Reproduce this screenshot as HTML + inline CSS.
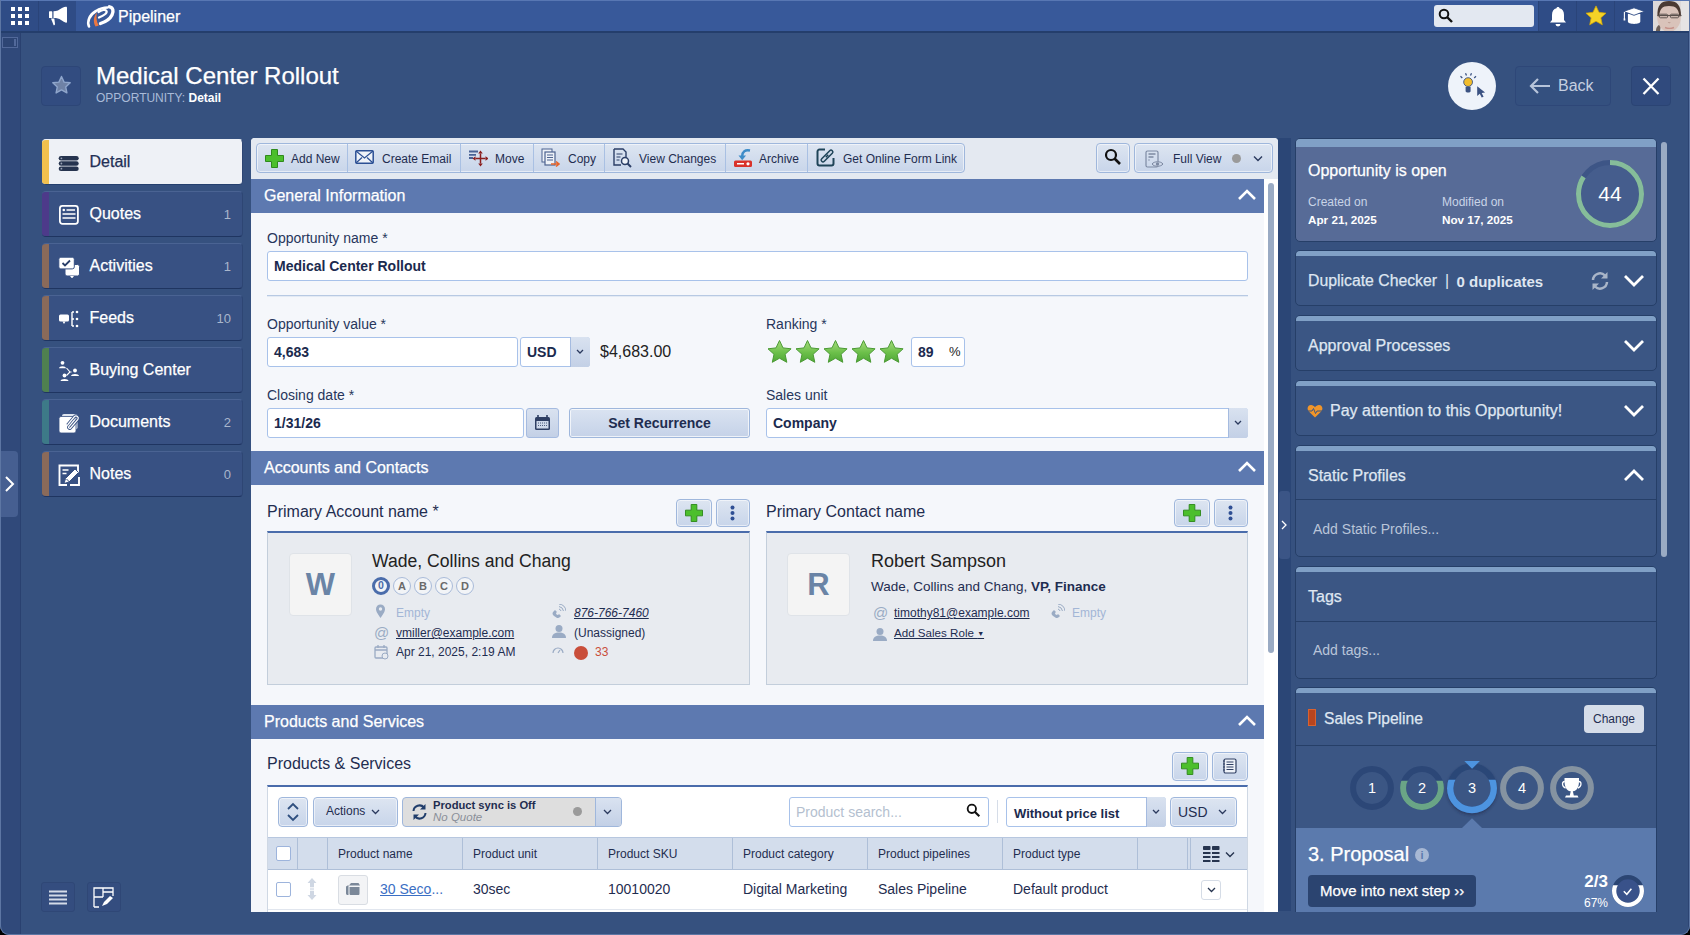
<!DOCTYPE html>
<html><head><meta charset="utf-8">
<style>
*{box-sizing:border-box;margin:0;padding:0}
html,body{width:1690px;height:935px;overflow:hidden}
body{position:relative;background:#36517f;font-family:"Liberation Sans",sans-serif;color:#1f2d50}
.a{position:absolute}
.w{color:#fff}
.st{-webkit-text-stroke:.25px currentColor}
.nw{white-space:nowrap}
/* top bar */
#top{left:0;top:0;width:1690px;height:33px;background:#38599a;border-top:1px solid #5877b3;border-bottom:2px solid #243e6c}
.tico{top:0;height:30px;background:#2f4c86}
/* left nav */
.nav{left:42px;width:201px;height:46px;border-radius:4px;background:#385183;border-top:1px solid #4a6393;border-bottom:1px solid #1f3561;border-right:1px solid #2e4674;overflow:hidden}
.nav .bar{left:0;top:-1px;bottom:-1px;width:7px}
.nav .lbl{left:47.5px;top:13px;font-size:16px;color:#fff;white-space:nowrap;-webkit-text-stroke:.25px currentColor}
.nav .cnt{right:11px;top:15px;font-size:13px;color:#a9b6cc}
.nav svg{position:absolute;left:16px;top:12px}

.tb{top:143px;height:30px;border:1px solid #9fb7dc;border-radius:4px;background:linear-gradient(#dde5f1,#c8d5ea);box-shadow:inset 0 0 0 1px rgba(255,255,255,.55)}
.tb.sm{border-color:#9fb7dc}
.sep{top:144px;width:1px;height:28px;background:#a9c0e3}
.tbt{top:152px;font-size:12px;color:#1f2d50;white-space:nowrap}
.sh{left:251px;width:1013px;height:34px;background:#5d79b0}
.sh span{position:absolute;left:13px;top:8px;font-size:16px;color:#fff;white-space:nowrap;-webkit-text-stroke:.25px currentColor}
.chev{left:1237px}
.lab{font-size:14px;color:#27365c;white-space:nowrap}
.inp{background:#fff;border:1px solid #a8c2ea;border-radius:3px}
.inp span{position:absolute;left:6px;top:6px;font-size:14px;font-weight:700;color:#1b2a4e;white-space:nowrap}
.dd{background:linear-gradient(#d9e2f0,#c3d0e6);border-left:1px solid #a5bbe0;border-radius:0 3px 3px 0}
.btn{background:linear-gradient(#dae3f1,#c5d2e8);border:1px solid #9fb7dc;box-shadow:inset 0 0 0 1px rgba(255,255,255,.7);border-radius:3px;font-size:14px;font-weight:700;color:#1f2d50;text-align:center;line-height:28px}
.card{background:#e8ebf0;border:1px solid #c3cedb;border-top:2px solid #4a6cab}
.av{width:63px;height:63px;background:#f4f4f4;border:1px solid #dfe3e8;border-radius:4px;text-align:center;line-height:62px;font-size:31px;font-weight:700;color:#6a84a6}

.badge{width:18px;height:18px;border-radius:50%;border:1px solid #a9bbd9;background:#f2f4f7;font-size:11px;font-weight:700;color:#6a6a6a;text-align:center;line-height:16px}
.badge.b0{border:3.5px solid #4a6cab;line-height:11px;color:#4a6cab;font-size:10.5px}
.dt{font-size:12px;color:#1f2d50;white-space:nowrap}
.u{text-decoration:underline}
.csep{top:838px;width:1px;height:31px;background:#aebfd8}
.cb{width:15px;height:15px;border:1px solid #9db4dc;background:#fff;border-radius:2px}
.th{top:847px;font-size:12px;color:#1f2d50;white-space:nowrap}
.td{top:881px;font-size:14px;color:#1f2d50;white-space:nowrap}

.rc{left:1295px;width:362px;border:1px solid #263f68;border-radius:5px;background:#3b5684;overflow:hidden}
.rc .band{left:0;top:0;width:100%;height:5px;background:#80a0c6}
.cd{left:1623px}
</style></head>
<body>
<!-- TOP BAR -->
<div id="top" class="a"></div>
<div class="a tico" style="left:1px;top:1px;width:37px"></div>
<div class="a tico" style="left:39px;top:1px;width:37px"></div>
<div class="a" style="left:38px;top:1px;width:1px;height:30px;background:#2a4479"></div>
<!-- grid icon -->
<svg class="a" style="left:11px;top:7px" width="19" height="19" viewBox="0 0 19 19" fill="#fff">
<rect x="0" y="0" width="4" height="4"/><rect x="7" y="0" width="4" height="4"/><rect x="14" y="0" width="4" height="4"/>
<rect x="0" y="7" width="4" height="4"/><rect x="7" y="7" width="4" height="4"/><rect x="14" y="7" width="4" height="4"/>
<rect x="0" y="14" width="4" height="4"/><rect x="7" y="14" width="4" height="4"/><rect x="14" y="14" width="4" height="4"/>
</svg>
<!-- megaphone -->
<svg class="a" style="left:40px;top:0" width="40" height="32" viewBox="0 0 40 32" fill="#fff">
<rect x="9" y="11.3" width="3.3" height="6.7" rx=".6"/>
<path d="M13.5 11.3C17 11.3 19 10 22 8Q25 6.5 26.5 6.8Q27 7 27 8V22Q27 23 26 22.8Q24 22 21 20C19 18.6 17 18 13.5 18z"/>
<path d="M11 18.5L14.3 18.5L15 24Q15 25.5 13.6 25.2z"/>
</svg>
<!-- logo -->
<svg class="a" style="left:84px;top:2px" width="34" height="28" viewBox="0 0 34 28">
<path d="M5 24.5C3 20 5 13 12 9C16 6.5 20 5.5 23.5 5.5" fill="none" stroke="#fff" stroke-width="2.6" stroke-linecap="round"/>
<path d="M25.5 4.8C29 5.5 30 9 28 13C26 17 21 20 16.5 21.5" fill="none" stroke="#fff" stroke-width="3.4" stroke-linecap="round"/>
<path d="M14.5 10C17.5 8 21.5 7 22.5 9C23.5 11 20 13.5 15 15.5" fill="none" stroke="#fff" stroke-width="2.2" stroke-linecap="round"/>
<path d="M12.5 11C9.5 15 9 20 11.5 24.5L14.8 23.5C12.5 20 12 15 12.8 11.5z" fill="#ec7640"/>
</svg>
<div class="a st w nw" style="left:118px;top:8px;font-size:16px">Pipeliner</div>
<!-- search -->
<div class="a" style="left:1434px;top:5px;width:100px;height:22px;background:#e3e8f1;border-radius:3px"></div>
<svg class="a" style="left:1438px;top:8px" width="16" height="16" viewBox="0 0 16 16"><circle cx="6" cy="6" r="4.3" fill="none" stroke="#111" stroke-width="2"/><path d="M9 9l5 5" stroke="#111" stroke-width="2.4"/></svg>
<div class="a tico" style="left:1538px;top:1px;width:115px"></div>
<div class="a" style="left:1538px;top:1px;width:1px;height:30px;background:#2a4479"></div>
<div class="a" style="left:1576px;top:1px;width:1px;height:30px;background:#2a4479"></div>
<div class="a" style="left:1614px;top:1px;width:1px;height:30px;background:#2a4479"></div>
<!-- bell -->
<svg class="a" style="left:1549px;top:6px" width="18" height="21" viewBox="0 0 18 21" fill="#fff"><path d="M9 1c1 0 1.5.6 1.5 1.3C13.5 3 15 5.5 15 9v5l2 2.5H1L3 14V9c0-3.5 1.5-6 4.5-6.7C7.5 1.6 8 1 9 1z"/><path d="M6.5 18h5a2.5 2.5 0 0 1-5 0z"/></svg>
<!-- star -->
<svg class="a" style="left:1585px;top:5px" width="22" height="21" viewBox="0 0 24 23"><path d="M12 1l3.3 7 7.7.9-5.7 5.2 1.6 7.6L12 17.8l-6.9 3.9 1.6-7.6L1 8.9 8.7 8z" fill="#f5d327" stroke="#d9a800" stroke-width=".8"/></svg>
<!-- grad cap -->
<svg class="a" style="left:1622px;top:6px" width="24" height="20" viewBox="0 0 24 20">
<path d="M5.9 8v7.6c0 1.6 2.8 2.3 6.2 2.3s6.2-.7 6.2-2.3V8z" fill="#fff"/>
<path d="M1.5 5.4L12 1.8 22.5 5.4 12 9.3z" fill="#fff" stroke="#2f4c86" stroke-width=".9"/>
<path d="M2.4 6v7" stroke="#fff" stroke-width="1.1"/><rect x="1.6" y="12.5" width="1.7" height="2" fill="#fff"/>
</svg>
<!-- avatar -->
<svg class="a" style="left:1653px;top:1px" width="37" height="30" viewBox="0 0 37 30">
<rect width="37" height="30" fill="#dedad9"/>
<rect x="28" width="9" height="30" fill="#e6e4e4"/>
<path d="M3 30c0-4 2-6 5-7l-1 7z" fill="#6b5e57"/>
<ellipse cx="16" cy="16" rx="11.8" ry="15" fill="#d9c3ba"/>
<path d="M4.5 15C4 4 8 0 16 0S28 4 28 15l-1.8.5C26 8 23 5 16 5S6.5 8 6.3 15.5z" fill="#4a3a33"/>
<path d="M4.5 14.5h24" stroke="#59504c" stroke-width="1.2"/>
<rect x="6.5" y="13.2" width="8" height="3.6" rx="1" fill="none" stroke="#5e5551" stroke-width="1"/>
<rect x="17.5" y="13.2" width="8" height="3.6" rx="1" fill="none" stroke="#5e5551" stroke-width="1"/>
<path d="M15 21c.5 1 2 1 2.5 0" stroke="#b99a90" stroke-width="1" fill="none"/>
<path d="M12 26.5c3 1.2 6 1.2 9 0" stroke="#c6928a" stroke-width="1.4" fill="none"/>
</svg>
<!-- LEFT STRIP -->
<div class="a" style="left:0;top:33px;width:21px;height:902px;background:#30497a;border-right:1px solid #2a4170"></div>
<div class="a" style="left:0;top:33px;width:1px;height:902px;background:#4f6a9b"></div>
<div class="a" style="left:2px;top:37px;width:16px;height:11px;border:1px solid #52699a;background:#2d4574"></div>
<div class="a" style="left:14px;top:39px;width:2px;height:7px;background:#52699a"></div>
<div class="a" style="left:1px;top:451px;width:17px;height:66px;background:#465f91;border-radius:0 4px 4px 0"></div>
<svg class="a" style="left:4px;top:475px" width="12" height="18" viewBox="0 0 12 18"><path d="M2 2l7 7-7 7" fill="none" stroke="#fff" stroke-width="2"/></svg>

<!-- HEADER -->
<div class="a" style="left:41px;top:66px;width:40px;height:40px;border:1px solid #2d4677;background:#324c80;border-radius:4px"></div>
<svg class="a" style="left:51px;top:75px" width="21" height="20" viewBox="0 0 21 20"><path d="M10.5 1.5l2.6 5.6 6.1.7-4.5 4.1 1.2 6-5.4-3-5.4 3 1.2-6-4.5-4.1 6.1-.7z" fill="#6f82a6" stroke="#8fa6cc" stroke-width="1.4" stroke-linejoin="round"/></svg>
<div class="a st w nw" style="left:96px;top:62px;font-size:24px">Medical Center Rollout</div>
<div class="a nw" style="left:96px;top:91px;font-size:12px;color:#a9bbd8">OPPORTUNITY: <b style="color:#fff">Detail</b></div>

<div class="a" style="left:1448px;top:62px;width:48px;height:48px;border-radius:50%;background:#eef3fa"></div>
<svg class="a" style="left:1450px;top:64px" width="44" height="44" viewBox="0 0 44 44">
<path d="M10.5 12.3l1.8 1.6M15.5 9.2l1 2.2M21.5 9.2l-1 2.2M26 12.3l-1.8 1.6" stroke="#3b5282" stroke-width="1.3"/>
<circle cx="18.1" cy="18.1" r="4.4" fill="#f2bd2c" stroke="#3b5282" stroke-width=".9"/>
<path d="M15.6 22.8h5v4.6q-2.5 2.4-5 0z" fill="#3b5282"/>
<path d="M27.2 22.3V32l2.6-2.3 1.9 3.9 1.9-.9-1.9-3.8 3.4-.3z" fill="#3b5282"/>
</svg>
<div class="a" style="left:1515px;top:66px;width:96px;height:40px;border:1px solid #2e4778;border-radius:4px;background:#34507f"></div>
<svg class="a" style="left:1529px;top:77px" width="22" height="18" viewBox="0 0 22 18"><path d="M21 9H3M9 2L2 9l7 7" fill="none" stroke="#b7c4da" stroke-width="2.2"/></svg>
<div class="a nw" style="left:1558px;top:77px;font-size:16px;color:#c5cfe0">Back</div>
<div class="a" style="left:1631px;top:66px;width:40px;height:40px;border:1px solid #2b4474;border-radius:4px;background:#304a7d"></div>
<svg class="a" style="left:1641px;top:76px" width="20" height="20" viewBox="0 0 20 20"><path d="M2.5 2.5l15 15.5M17.5 2.5l-15 15.5" stroke="#fff" stroke-width="2.3"/></svg>

<!-- LEFT NAV -->
<div class="a nav" style="top:139px;background:#eef1f6;border-top-color:#eef1f6;border-bottom-color:#25406e"><div class="a bar" style="background:#f2c04e"></div>
<svg width="22" height="22" viewBox="0 0 22 22"><g fill="#26344f"><rect x="0.7" y="4" width="20" height="4.6" rx="2.3"/><rect x="0.7" y="9.2" width="20" height="4.6" rx="2.3"/><rect x="0.7" y="14.4" width="20" height="4.6" rx="2.3"/></g><g fill="#9aa3b5"><circle cx="3.4" cy="6.3" r=".9"/><circle cx="3.4" cy="11.5" r=".9"/><circle cx="3.4" cy="16.7" r=".9"/></g></svg>
<div class="a lbl" style="color:#222f55">Detail</div></div>

<div class="a nav" style="top:191px"><div class="a bar" style="background:#4d3a8a"></div>
<svg width="22" height="22" viewBox="0 0 22 22"><rect x="1.9" y="1.8" width="18" height="18" rx="2.5" fill="none" stroke="#fff" stroke-width="1.8"/><circle cx="5.8" cy="6" r="1.3" fill="#fff"/><path d="M8.5 6h8.5M4.5 10h13M4.5 14h13" stroke="#fff" stroke-width="1.6"/></svg>
<div class="a lbl">Quotes</div><div class="a cnt">1</div></div>

<div class="a nav" style="top:243px"><div class="a bar" style="background:#8a6a5a"></div>
<svg width="22" height="22" viewBox="0 0 22 22"><rect x="7" y="8.5" width="14.5" height="11.5" rx="2" fill="#fff" stroke="#385183" stroke-width="1"/><path d="M12 20h4l-2 2.5z" fill="#fff"/><rect x="0.8" y="1.2" width="15.5" height="11.7" rx="2" fill="#fff" stroke="#385183" stroke-width="1"/><path d="M4.5 7l2.5 2.5 5-5" fill="none" stroke="#2a3f69" stroke-width="1.8"/></svg>
<div class="a lbl">Activities</div><div class="a cnt">1</div></div>

<div class="a nav" style="top:295px"><div class="a bar" style="background:#8a6a5a"></div>
<svg width="22" height="22" viewBox="0 0 22 22"><rect x="1" y="6.6" width="10" height="7" rx="1.5" fill="#fff"/><path d="M4.5 13.5h3l-1.5 2.5z" fill="#fff"/><path d="M14 4v14M14 4h2M14 11h2M14 18h2" stroke="#fff" stroke-width="1.4"/><circle cx="19" cy="4" r="1.3" fill="#fff"/><circle cx="19" cy="11" r="1.3" fill="#fff"/><circle cx="19" cy="18" r="1.3" fill="#fff"/></svg>
<div class="a lbl">Feeds</div><div class="a cnt">10</div></div>

<div class="a nav" style="top:347px"><div class="a bar" style="background:#4f8050"></div>
<svg width="22" height="22" viewBox="0 0 22 22" fill="#fff"><circle cx="4.5" cy="2.8" r="1.9"/><path d="M1 8.3c0-2.8 7-2.8 7 0z"/><circle cx="17" cy="10.5" r="1.9"/><path d="M13 16c0-2.8 8-2.8 8 0z"/><circle cx="6.5" cy="15.5" r="1.9"/><path d="M2.5 21c0-2.8 8-2.8 8 0z"/><path d="M8.5 8l3.5 4-3.5 3.5M12 12h1.5" fill="none" stroke="#fff" stroke-width="1.1"/></svg>
<div class="a lbl">Buying Center</div></div>

<div class="a nav" style="top:399px"><div class="a bar" style="background:#3d7a88"></div>
<svg width="22" height="22" viewBox="0 0 22 22"><rect x="4" y="2" width="15.5" height="15.5" rx="2" fill="#dfe5ef"/><rect x="1" y="4.5" width="17" height="16.5" rx="2" fill="#fff" stroke="#385183" stroke-width=".8"/><path d="M9.5 13L16.5 4.5a2.3 2.3 0 0 1 3.4 3L12.5 16a1.1 1.1 0 0 1-1.7-1.4L16.8 7.5" fill="none" stroke="#385183" stroke-width="3"/><path d="M9.5 13L16.5 4.5a2.3 2.3 0 0 1 3.4 3L12.5 16a1.1 1.1 0 0 1-1.7-1.4L16.8 7.5" fill="none" stroke="#fff" stroke-width="1.2"/></svg>
<div class="a lbl">Documents</div><div class="a cnt">2</div></div>

<div class="a nav" style="top:451px"><div class="a bar" style="background:#8a6a5a"></div>
<svg width="22" height="22" viewBox="0 0 22 22"><path d="M20 9V1.5H1.5V21H9" fill="none" stroke="#fff" stroke-width="1.9"/><path d="M4.5 6h6M4.5 9.5h4" stroke="#fff" stroke-width="1.4"/><path d="M6 19.5l1.5-5L17 5l3.5 3.5L11 18z" fill="#fff" stroke="#385183" stroke-width="1"/><path d="M8.5 15l3 3" stroke="#385183" stroke-width="1"/><path d="M12 21h9V13" fill="none" stroke="#fff" stroke-width="1.9"/></svg>
<div class="a lbl">Notes</div><div class="a cnt">0</div></div>

<!-- bottom-left buttons -->
<div class="a" style="left:41px;top:882px;width:34px;height:30px;border:1px solid #2f4776;background:#344d7f;border-radius:3px"></div>
<svg class="a" style="left:49px;top:890px" width="18" height="15" viewBox="0 0 18 15"><path d="M0 1.5h18M0 5.5h18M0 9.5h18M0 13.5h18" stroke="#d4dbe8" stroke-width="1.8"/></svg>
<div class="a" style="left:87px;top:882px;width:34px;height:30px;border:1px solid #2f4776;background:#344d7f;border-radius:3px"></div>
<svg class="a" style="left:93px;top:887px" width="22" height="21" viewBox="0 0 22 21"><path d="M1 20V1h19v8M1 10h9M10 1v9M10 5h10M1 20h5" fill="none" stroke="#fff" stroke-width="1.3"/><path d="M9 19l2-4 6-6 3 2-6 6z" fill="#fff"/></svg>

<!-- MAIN PANEL placeholder -->
<div id="main" class="a" style="left:251px;top:138px;width:1027px;height:774px;background:#fff;border-radius:4px 4px 0 0;overflow:hidden"><div class="a" style="left:-251px;top:-138px;width:1690px;height:935px">
<!-- toolbar -->
<div class="a" style="left:251px;top:138px;width:1027px;height:41px;background:#e4e9f1"></div>
<div class="a tb" style="left:256px;width:709px"></div>
<div class="a sep" style="left:347px"></div><div class="a sep" style="left:460px"></div><div class="a sep" style="left:533px"></div><div class="a sep" style="left:604px"></div><div class="a sep" style="left:725px"></div><div class="a sep" style="left:807px"></div>
<div class="a tbt" style="left:291px">Add New</div>
<div class="a tbt" style="left:382px">Create Email</div>
<div class="a tbt" style="left:495px">Move</div>
<div class="a tbt" style="left:568px">Copy</div>
<div class="a tbt" style="left:639px">View Changes</div>
<div class="a tbt" style="left:759px">Archive</div>
<div class="a tbt" style="left:843px">Get Online Form Link</div>
<!-- icons -->
<svg class="a" style="left:265px;top:149px" width="19" height="19" viewBox="0 0 19 19"><path d="M6.5 .5h6v6h6v6h-6v6h-6v-6h-6v-6h6z" fill="#4cbf2c" stroke="#2f8a1c" stroke-width="1"/></svg>
<svg class="a" style="left:355px;top:150px" width="19" height="14" viewBox="0 0 19 14"><rect x=".8" y=".8" width="17.4" height="12.4" rx="1" fill="#eef2f8" stroke="#2b4f94" stroke-width="1.5"/><path d="M1 1l8.5 7L18 1M1 13l6-5.5M18 13l-6-5.5" fill="none" stroke="#2b4f94" stroke-width="1.2"/></svg>
<svg class="a" style="left:468px;top:149px" width="20" height="18" viewBox="0 0 20 18"><path d="M1 2.5h9M1 5.8h7M1 9h4" stroke="#4a6396" stroke-width="1.8"/><path d="M12.5 4.5v10M7.5 9.5h10" stroke="#8a1e1e" stroke-width="1.5"/><path d="M12.5 1.5l-2.3 3h4.6zM12.5 17.5l-2.3-3h4.6zM4.5 9.5l3-2.3v4.6zM20.5 9.5l-3-2.3v4.6z" fill="#8a1e1e"/></svg>
<svg class="a" style="left:541px;top:148px" width="20" height="20" viewBox="0 0 20 20"><rect x="1" y="1" width="10" height="13" fill="#eef2f8" stroke="#4d6390" stroke-width="1"/><rect x="4" y="4" width="10" height="13" fill="#eef2f8" stroke="#4d6390" stroke-width="1.2"/><path d="M6 7h6M6 9.5h6M6 12h6" stroke="#4d6390" stroke-width="1"/><path d="M10 16h7M15 13.5l3 2.5-3 2.5" fill="none" stroke="#e8642a" stroke-width="1.6"/></svg>
<svg class="a" style="left:612px;top:148px" width="20" height="20" viewBox="0 0 20 20"><path d="M2 1h9l3 3v5" fill="none" stroke="#2b3e66" stroke-width="1.4"/><path d="M2 1v16h7" fill="none" stroke="#2b3e66" stroke-width="1.4"/><path d="M4.5 6h6M4.5 9h4M4.5 12h3" stroke="#2b3e66" stroke-width="1.2"/><circle cx="13" cy="13" r="3.5" fill="#eef2f8" stroke="#2b3e66" stroke-width="1.5"/><path d="M15.5 15.5L19 19" stroke="#2b3e66" stroke-width="2"/></svg>
<svg class="a" style="left:733px;top:148px" width="20" height="20" viewBox="0 0 20 20"><path d="M17 2.5C12 1.5 9.5 3.5 9.2 8" fill="none" stroke="#3d8cc8" stroke-width="2.4"/><path d="M5.5 7.5l3.7 4.8 3.8-4.8z" fill="#3d8cc8"/><rect x="1" y="12.5" width="18" height="6.5" rx="1.5" fill="#d9322b"/><path d="M4 15.8h7" stroke="#fff" stroke-width="1.6"/><circle cx="15" cy="15.8" r="1.6" fill="#fff"/></svg>
<svg class="a" style="left:816px;top:148px" width="19" height="19" viewBox="0 0 19 19"><path d="M9 1.5H3.5a2 2 0 0 0-2 2v12a2 2 0 0 0 2 2h12a2 2 0 0 0 2-2V10" fill="none" stroke="#1f4458" stroke-width="2"/><path d="M7 12L15 4" stroke="#1f4458" stroke-width="5.2" stroke-linecap="round"/><path d="M7 12L15 4" stroke="#cfdaea" stroke-width="2.2" stroke-linecap="round"/><path d="M9.8 9.2l2.4-2.4" stroke="#1f4458" stroke-width="1.6"/></svg>
<div class="a tb" style="left:1096px;width:34px"></div>
<svg class="a" style="left:1104px;top:148px" width="18" height="18" viewBox="0 0 18 18"><circle cx="7" cy="7" r="5" fill="none" stroke="#111" stroke-width="2.2"/><path d="M10.5 10.5l5.5 5.5" stroke="#111" stroke-width="2.6"/></svg>
<div class="a tb" style="left:1134px;width:139px"></div>
<svg class="a" style="left:1145px;top:150px" width="19" height="19" viewBox="0 0 19 19"><rect x="1" y="1" width="12" height="16" rx="1.5" fill="none" stroke="#7d8aa3" stroke-width="1.2"/><path d="M3.5 4h7M3.5 7h5M3.5 10h1" stroke="#7d8aa3" stroke-width="1.3"/><path d="M7 14c2-3 9-3 11 0-2 3-9 3-11 0z" fill="#cfd9ea" stroke="#7d8aa3" stroke-width="1"/><circle cx="12.5" cy="14" r="1.7" fill="#7d8aa3"/></svg>
<div class="a tbt" style="left:1173px">Full View</div>
<div class="a" style="left:1232px;top:154px;width:9px;height:9px;border-radius:50%;background:#9a9a9a"></div>
<svg class="a" style="left:1253px;top:155px" width="10" height="7" viewBox="0 0 10 7"><path d="M1 1.5l4 4 4-4" fill="none" stroke="#2b3a5e" stroke-width="1.4"/></svg>

<!-- content area -->
<div class="a" style="left:251px;top:179px;width:1013px;height:733px;background:#f5f7fb"></div>
<div class="a" style="left:1264px;top:179px;width:14px;height:733px;background:#fff"></div>
<div class="a" style="left:1268px;top:183px;width:6px;height:470px;background:#9aabc4;border-radius:3px"></div>

<!-- General Information -->
<div class="a sh" style="top:179px"><span>General Information</span></div>
<svg class="a chev" style="top:189px" width="20" height="12" viewBox="0 0 20 12"><path d="M2 10l8-8 8 8" fill="none" stroke="#fff" stroke-width="2.6"/></svg>
<div class="a lab" style="left:267px;top:230px">Opportunity name *</div>
<div class="a inp" style="left:267px;top:251px;width:981px;height:30px"><span>Medical Center Rollout</span></div>
<div class="a" style="left:267px;top:295px;width:981px;height:1px;background:#b7c9e3"></div><div class="a" style="left:267px;top:296px;width:981px;height:1px;background:#e3eaf4"></div>

<div class="a lab" style="left:267px;top:316px">Opportunity value *</div>
<div class="a inp" style="left:267px;top:337px;width:251px;height:30px"><span>4,683</span></div>
<div class="a inp" style="left:520px;top:337px;width:70px;height:30px"><span>USD</span></div>
<div class="a dd" style="left:570px;top:337px;width:20px;height:30px"></div>
<svg class="a" style="left:576px;top:349px" width="8" height="6" viewBox="0 0 8 6"><path d="M1 1l3 3 3-3" fill="none" stroke="#2b3a5e" stroke-width="1.3"/></svg>
<div class="a nw" style="left:600px;top:343px;font-size:16px;color:#222">$4,683.00</div>

<div class="a lab" style="left:766px;top:316px">Ranking *</div>
<svg class="a" style="left:766px;top:339px" width="140" height="28" viewBox="0 0 140 28">
<defs><linearGradient id="sg" x1="0" y1="0" x2="0" y2="1"><stop offset="0" stop-color="#a8dc7e"/><stop offset=".55" stop-color="#6cc04a"/><stop offset="1" stop-color="#4fa637"/></linearGradient>
<path id="st" d="M13.5 1.5l3.5 7.4 8.1.9-6 5.5 1.7 8-7.3-4.1-7.2 4.1 1.7-8-6-5.5 8-.9z" fill="url(#sg)" stroke="#4a9a33" stroke-width="1"/></defs>
<use href="#st" x="0"/><use href="#st" x="28"/><use href="#st" x="56"/><use href="#st" x="84"/><use href="#st" x="112"/>
</svg>
<div class="a inp" style="left:911px;top:337px;width:54px;height:30px"><span style="left:6px">89</span></div>
<div class="a nw" style="left:949px;top:344px;font-size:13px;color:#222">%</div>

<div class="a lab" style="left:267px;top:387px">Closing date *</div>
<div class="a inp" style="left:267px;top:408px;width:257px;height:30px"><span>1/31/26</span></div>
<div class="a dd" style="left:526px;top:408px;width:33px;height:30px;border:1px solid #a5bbe0;border-radius:3px"></div>
<svg class="a" style="left:534px;top:414px" width="17" height="17" viewBox="0 0 17 17"><rect x="1" y="3" width="15" height="13" rx="1.5" fill="#2f3f63"/><rect x="2.5" y="7" width="12" height="7.5" fill="#cfd9ea"/><path d="M4 1v4M13 1v4" stroke="#2f3f63" stroke-width="1.6"/><path d="M4 9h9M4 11.5h9" stroke="#2f3f63" stroke-width=".8" stroke-dasharray="1 1"/></svg>
<div class="a btn" style="left:569px;top:408px;width:181px;height:30px">Set Recurrence</div>

<div class="a lab" style="left:766px;top:387px">Sales unit</div>
<div class="a inp" style="left:766px;top:408px;width:482px;height:30px"><span>Company</span></div>
<div class="a dd" style="left:1228px;top:408px;width:20px;height:30px"></div>
<svg class="a" style="left:1234px;top:420px" width="8" height="6" viewBox="0 0 8 6"><path d="M1 1l3 3 3-3" fill="none" stroke="#2b3a5e" stroke-width="1.3"/></svg>

<!-- Accounts and Contacts -->
<div class="a sh" style="top:451px"><span>Accounts and Contacts</span></div>
<svg class="a chev" style="top:461px" width="20" height="12" viewBox="0 0 20 12"><path d="M2 10l8-8 8 8" fill="none" stroke="#fff" stroke-width="2.6"/></svg>
<div class="a nw" style="left:267px;top:503px;font-size:16px;color:#1f2d50">Primary Account name *</div>
<div class="a nw" style="left:766px;top:503px;font-size:16px;color:#1f2d50">Primary Contact name</div>
<div class="a tb sm" style="left:676px;top:499px;width:36px;height:28px"></div>
<svg class="a" style="left:685px;top:504px" width="18" height="18" viewBox="0 0 19 19"><path d="M6.5 .5h6v6h6v6h-6v6h-6v-6h-6v-6h6z" fill="#4cbf2c" stroke="#2f8a1c" stroke-width="1"/></svg>
<div class="a tb sm" style="left:716px;top:499px;width:34px;height:28px"></div>
<svg class="a" style="left:730px;top:505px" width="5" height="16" viewBox="0 0 5 16" fill="#2f4f94"><circle cx="2.5" cy="2.5" r="2"/><circle cx="2.5" cy="8" r="2"/><circle cx="2.5" cy="13.5" r="2"/></svg>
<div class="a tb sm" style="left:1174px;top:499px;width:36px;height:28px"></div>
<svg class="a" style="left:1183px;top:504px" width="18" height="18" viewBox="0 0 19 19"><path d="M6.5 .5h6v6h6v6h-6v6h-6v-6h-6v-6h6z" fill="#4cbf2c" stroke="#2f8a1c" stroke-width="1"/></svg>
<div class="a tb sm" style="left:1214px;top:499px;width:34px;height:28px"></div>
<svg class="a" style="left:1228px;top:505px" width="5" height="16" viewBox="0 0 5 16" fill="#2f4f94"><circle cx="2.5" cy="2.5" r="2"/><circle cx="2.5" cy="8" r="2"/><circle cx="2.5" cy="13.5" r="2"/></svg>

<div class="a card" style="left:267px;top:531px;width:483px;height:154px"></div>
<div class="a card" style="left:766px;top:531px;width:482px;height:154px"></div>
<div class="a av" style="left:289px;top:553px">W</div>
<div class="a av" style="left:787px;top:553px">R</div>
<div class="a nw" style="left:372px;top:551px;font-size:17.6px;color:#222">Wade, Collins and Chang</div>
<div class="a nw" style="left:871px;top:551px;font-size:18px;color:#222">Robert Sampson</div>
<div class="a nw" style="left:871px;top:579px;font-size:13.5px;color:#1f2d50">Wade, Collins and Chang, <b>VP, Finance</b></div>


<!-- account details -->
<div class="a badge b0" style="left:372px;top:577px">0</div>
<div class="a badge" style="left:393px;top:577px">A</div>
<div class="a badge" style="left:414px;top:577px">B</div>
<div class="a badge" style="left:435px;top:577px">C</div>
<div class="a badge" style="left:456px;top:577px">D</div>
<svg class="a" style="left:375px;top:604px" width="11" height="15" viewBox="0 0 11 15"><path d="M5.5 14C2 9 1 7 1 5a4.5 4.5 0 0 1 9 0c0 2-1 4-4.5 9z" fill="#9aabc4"/><circle cx="5.5" cy="5" r="1.7" fill="#e8ebf0"/></svg>
<div class="a dt" style="left:396px;top:606px;color:#a3b6d6">Empty</div>
<div class="a dt" style="left:374px;top:624px;font-size:15px;color:#9aabc4">@</div>
<div class="a dt u" style="left:396px;top:626px">vmiller@example.com</div>
<svg class="a" style="left:374px;top:644px" width="15" height="16" viewBox="0 0 15 16"><rect x="1" y="3" width="12" height="11" rx="1" fill="none" stroke="#9aabc4" stroke-width="1.3"/><path d="M1 6h12M4 1v3M10 1v3" stroke="#9aabc4" stroke-width="1.3"/><circle cx="11" cy="12" r="3" fill="#e8ebf0" stroke="#9aabc4" stroke-width="1"/></svg>
<div class="a dt" style="left:396px;top:645px">Apr 21, 2025, 2:19 AM</div>
<svg class="a" style="left:551px;top:604px" width="15" height="15" viewBox="0 0 15 15"><path d="M3 12c-2-2-2-3 0-5l1-1 2 2-1 1c0 1 1 2 2 2l1-1 2 2-1 1c-2 2-3 1-6-1z" fill="#9aabc4"/><path d="M8 5a3 3 0 0 1 2 2M8 2.5a5.5 5.5 0 0 1 4.5 4.5M8 0a8 8 0 0 1 7 7" fill="none" stroke="#9aabc4" stroke-width="1"/></svg>
<div class="a dt u" style="left:574px;top:606px;font-style:italic">876-766-7460</div>
<svg class="a" style="left:552px;top:624px" width="14" height="15" viewBox="0 0 14 15" fill="#9aabc4"><circle cx="7" cy="4.5" r="3.5"/><path d="M0 14c0-4 3-5.5 7-5.5s7 1.5 7 5.5z"/></svg>
<div class="a dt" style="left:574px;top:626px">(Unassigned)</div>
<svg class="a" style="left:552px;top:646px" width="12" height="8" viewBox="0 0 12 8"><path d="M1 7a5 5 0 0 1 10 0" fill="none" stroke="#9aabc4" stroke-width="1.2"/><path d="M6 7l2-3" stroke="#9aabc4" stroke-width="1.2"/></svg>
<div class="a" style="left:574px;top:646px;width:14px;height:14px;border-radius:50%;background:#c94e3a"></div>
<div class="a dt" style="left:595px;top:645px;color:#c94e3a">33</div>
<!-- contact details -->
<div class="a dt" style="left:873px;top:604px;font-size:15px;color:#9aabc4">@</div>
<div class="a dt u" style="left:894px;top:606px">timothy81@example.com</div>
<svg class="a" style="left:1050px;top:604px" width="15" height="15" viewBox="0 0 15 15"><path d="M3 12c-2-2-2-3 0-5l1-1 2 2-1 1c0 1 1 2 2 2l1-1 2 2-1 1c-2 2-3 1-6-1z" fill="#9aabc4"/><path d="M8 5a3 3 0 0 1 2 2M8 2.5a5.5 5.5 0 0 1 4.5 4.5M8 0a8 8 0 0 1 7 7" fill="none" stroke="#9aabc4" stroke-width="1"/></svg>
<div class="a dt" style="left:1072px;top:606px;color:#a3b6d6">Empty</div>
<svg class="a" style="left:873px;top:627px" width="14" height="15" viewBox="0 0 14 15" fill="#9aabc4"><circle cx="7" cy="4.5" r="3.5"/><path d="M0 14c0-4 3-5.5 7-5.5s7 1.5 7 5.5z"/></svg>
<div class="a dt u" style="left:894px;top:626px;font-size:11.6px">Add Sales Role <span style="font-size:7px;position:relative;top:-1px">&#9660;</span></div>

<!-- Products and Services -->
<div class="a sh" style="top:705px"><span>Products and Services</span></div>
<svg class="a chev" style="top:715px" width="20" height="12" viewBox="0 0 20 12"><path d="M2 10l8-8 8 8" fill="none" stroke="#fff" stroke-width="2.6"/></svg>
<div class="a nw" style="left:267px;top:755px;font-size:16px;color:#1f2d50">Products &amp; Services</div>
<div class="a tb sm" style="left:1172px;top:752px;width:36px;height:29px"></div>
<svg class="a" style="left:1181px;top:757px" width="18" height="18" viewBox="0 0 19 19"><path d="M6.5 .5h6v6h6v6h-6v6h-6v-6h-6v-6h6z" fill="#4cbf2c" stroke="#2f8a1c" stroke-width="1"/></svg>
<div class="a tb sm" style="left:1212px;top:752px;width:36px;height:29px"></div>
<svg class="a" style="left:1222px;top:758px" width="15" height="16" viewBox="0 0 15 16"><rect x="2" y="1" width="12" height="14" rx="1.5" fill="#eef2f8" stroke="#2f3f63" stroke-width="1.2"/><path d="M4.5 4h7M4.5 6.5h7M4.5 9h7M4.5 11.5h7" stroke="#2f3f63" stroke-width="1"/><path d="M1 3h2M1 6h2M1 9h2M1 12h2" stroke="#2f3f63" stroke-width="1"/></svg>
<div class="a" style="left:267px;top:785px;width:981px;height:130px;background:#fff;border:1px solid #cfd8e4;border-top:2px solid #4a6cab"></div>
<div class="a tb sm" style="left:278px;top:797px;width:30px;height:30px"></div>
<svg class="a" style="left:286px;top:802px" width="14" height="20" viewBox="0 0 14 20"><path d="M2 7l5-5 5 5M2 13l5 5 5-5" fill="none" stroke="#2f4f7f" stroke-width="1.8"/></svg>
<div class="a tb sm" style="left:313px;top:797px;width:85px;height:30px"></div>
<div class="a nw" style="left:326px;top:804px;font-size:12px;color:#1f2d50">Actions</div>
<svg class="a" style="left:371px;top:809px" width="9" height="6" viewBox="0 0 9 6"><path d="M1 1l3.5 3.5L8 1" fill="none" stroke="#2b3a5e" stroke-width="1.3"/></svg>
<div class="a" style="left:402px;top:797px;width:220px;height:30px;border:1px solid #9fb7dc;border-radius:4px;background:#dedede;overflow:hidden"><div class="a" style="left:192px;top:0;width:28px;height:28px;background:linear-gradient(#d9e2f0,#c3d0e6);border-left:1px solid #9fb7dc"></div></div>
<svg class="a" style="left:411px;top:803px" width="17" height="18" viewBox="0 0 17 18"><path d="M2.5 8A6 6 0 0 1 13 4.5" fill="none" stroke="#213e6b" stroke-width="2"/><path d="M14.5 1v5.5H9z" fill="#213e6b"/><path d="M14.5 10A6 6 0 0 1 4 13.5" fill="none" stroke="#213e6b" stroke-width="2"/><path d="M2.5 17v-5.5H8z" fill="#213e6b"/></svg>
<div class="a nw" style="left:433px;top:799px;font-size:11.2px;font-weight:700;color:#1f2d50">Product sync is Off</div>
<div class="a nw" style="left:433px;top:811px;font-size:11.5px;font-style:italic;color:#8a8f99">No Quote</div>
<div class="a" style="left:573px;top:807px;width:9px;height:9px;border-radius:50%;background:#9a9a9a"></div>
<svg class="a" style="left:603px;top:809px" width="9" height="6" viewBox="0 0 9 6"><path d="M1 1l3.5 3.5L8 1" fill="none" stroke="#2b3a5e" stroke-width="1.3"/></svg>
<div class="a inp" style="left:789px;top:797px;width:200px;height:30px"></div>
<div class="a nw" style="left:796px;top:804px;font-size:14px;color:#b4bfcf">Product search...</div>
<svg class="a" style="left:966px;top:803px" width="15" height="15" viewBox="0 0 18 18"><circle cx="7" cy="7" r="5" fill="none" stroke="#111" stroke-width="2.2"/><path d="M10.5 10.5l5.5 5.5" stroke="#111" stroke-width="2.6"/></svg>
<div class="a" style="left:997px;top:800px;width:1px;height:23px;background:#d6dde8"></div>
<div class="a inp" style="left:1006px;top:797px;width:160px;height:30px"><span style="font-size:13px;left:7px;top:8px">Without price list</span></div>
<div class="a dd" style="left:1146px;top:797px;width:20px;height:30px"></div>
<svg class="a" style="left:1152px;top:809px" width="8" height="6" viewBox="0 0 8 6"><path d="M1 1l3 3 3-3" fill="none" stroke="#2b3a5e" stroke-width="1.3"/></svg>
<div class="a tb sm" style="left:1170px;top:797px;width:67px;height:30px"></div>
<div class="a nw" style="left:1178px;top:804px;font-size:14px;color:#1f2d50">USD</div>
<svg class="a" style="left:1218px;top:809px" width="9" height="6" viewBox="0 0 9 6"><path d="M1 1l3.5 3.5L8 1" fill="none" stroke="#2b3a5e" stroke-width="1.3"/></svg>
<!-- table -->
<div class="a" style="left:268px;top:837px;width:979px;height:33px;background:#d3ddec;border-top:1px solid #b7c7df;border-bottom:1px solid #aebfd8"></div>
<div class="a csep" style="left:297px"></div><div class="a csep" style="left:327px"></div><div class="a csep" style="left:462px"></div><div class="a csep" style="left:597px"></div><div class="a csep" style="left:732px"></div><div class="a csep" style="left:867px"></div><div class="a csep" style="left:1002px"></div><div class="a csep" style="left:1137px"></div><div class="a csep" style="left:1187px"></div><div class="a csep" style="left:1190px"></div>
<div class="a cb" style="left:276px;top:846px"></div>
<div class="a th" style="left:338px">Product name</div>
<div class="a th" style="left:473px">Product unit</div>
<div class="a th" style="left:608px">Product SKU</div>
<div class="a th" style="left:743px">Product category</div>
<div class="a th" style="left:878px">Product pipelines</div>
<div class="a th" style="left:1013px">Product type</div>
<svg class="a" style="left:1203px;top:846px" width="17" height="16" viewBox="0 0 17 16" fill="#26344f"><rect x="0" y="0" width="7.5" height="4" rx=".8"/><rect x="9" y="0" width="7.5" height="4" rx=".8"/><rect x="0" y="6" width="7.5" height="2"/><rect x="9" y="6" width="7.5" height="2"/><rect x="0" y="10" width="7.5" height="2"/><rect x="9" y="10" width="7.5" height="2"/><rect x="0" y="14" width="7.5" height="2"/><rect x="9" y="14" width="7.5" height="2"/></svg>
<svg class="a" style="left:1225px;top:851px" width="10" height="7" viewBox="0 0 10 7"><path d="M1 1.5l4 4 4-4" fill="none" stroke="#26344f" stroke-width="1.4"/></svg>
<div class="a cb" style="left:276px;top:882px"></div>
<svg class="a" style="left:306px;top:877px" width="12" height="24" viewBox="0 0 12 24"><path d="M6 1l4.5 5H8v4H4V6H1.5z" fill="#cfd7e3"/><path d="M6 23l4.5-5H8v-4H4v4H1.5z" fill="#cfd7e3"/><path d="M4 11.2h4M4 12.8h4" stroke="#cfd7e3" stroke-width=".9"/></svg>
<div class="a" style="left:338px;top:875px;width:30px;height:30px;border:1px solid #d9dde3;border-radius:3px;background:#f3f4f6"></div>
<svg class="a" style="left:345px;top:882px" width="16" height="15" viewBox="0 0 16 15"><path d="M4.5 5h10v6.5c0 1-.5 1.5-1.5 1.5H6c-1 0-1.5-.5-1.5-1.5z" fill="#7b8899"/><path d="M4 3.5L6 1h7.5l1.5 2.5z" fill="#7b8899"/><path d="M1 4.5l2.5-1.5V13H2.5c-.8 0-1.5-.7-1.5-1.5z" fill="#7b8899"/></svg>
<div class="a td" style="left:380px;color:#3b6fc4"><span style="text-decoration:underline">30 Seco</span>...</div>
<div class="a td" style="left:473px">30sec</div>
<div class="a td" style="left:608px">10010020</div>
<div class="a td" style="left:743px">Digital Marketing</div>
<div class="a td" style="left:878px">Sales Pipeline</div>
<div class="a td" style="left:1013px">Default product</div>
<div class="a" style="left:1201px;top:880px;width:20px;height:20px;border:1px solid #d5dce6;border-radius:3px;background:#fff"></div>
<svg class="a" style="left:1207px;top:887px" width="9" height="6" viewBox="0 0 9 6"><path d="M1 1l3.5 3.5L8 1" fill="none" stroke="#26344f" stroke-width="1.3"/></svg>
<div class="a" style="left:268px;top:909px;width:979px;height:1px;background:#e1e6ee"></div>

</div></div>

<!-- RIGHT STRIP -->
<div class="a" style="left:1278px;top:138px;width:13px;height:773px;background:#2b4676"></div>
<div class="a" style="left:1279px;top:491px;width:11px;height:68px;background:#3b5586;border-radius:3px"></div>
<svg class="a" style="left:1280px;top:519px" width="8" height="12" viewBox="0 0 8 12"><path d="M2 2l4 4-4 4" fill="none" stroke="#fff" stroke-width="1.3"/></svg>


<!-- RIGHT PANEL -->
<div class="a" style="left:1661px;top:142px;width:6px;height:415px;background:#9aabc4;border-radius:3px"></div>
<!-- card1 -->
<div class="a rc" style="top:138px;height:104px;background:#576b97"><div class="a band" style="height:8px"></div></div>
<div class="a st w nw" style="left:1308px;top:162px;font-size:16px">Opportunity is open</div>
<div class="a nw" style="left:1308px;top:195px;font-size:12px;color:#c9d4e7">Created on</div>
<div class="a w nw" style="left:1308px;top:213px;font-size:11.7px;font-weight:700">Apr 21, 2025</div>
<div class="a nw" style="left:1442px;top:195px;font-size:12px;color:#c9d4e7">Modified on</div>
<div class="a w nw" style="left:1442px;top:213px;font-size:11.7px;font-weight:700">Nov 17, 2025</div>
<svg class="a" style="left:1574px;top:158px" width="72" height="72" viewBox="0 0 72 72">
<circle cx="36" cy="36" r="31.5" fill="#455d8d" stroke="#3d5586" stroke-width="5"/>
<circle cx="36" cy="36" r="31.5" fill="none" stroke="#86bd9a" stroke-width="5" stroke-dasharray="166.3 197.9" transform="rotate(-90 36 36)"/>
</svg>
<div class="a w nw" style="left:1597px;top:182px;font-size:21px;width:26px;text-align:center">44</div>
<!-- card2 -->
<div class="a rc" style="top:250px;height:56px"><div class="a band"></div></div>
<div class="a st nw" style="left:1308px;top:272px;font-size:15.8px;color:#dfe6f1">Duplicate Checker</div><div class="a nw" style="left:1445px;top:272px;font-size:15.8px;color:#dfe6f1">|</div><div class="a nw" style="left:1456.5px;top:272.5px;font-size:15px;font-weight:700;color:#dfe6f1">0 duplicates</div>
<svg class="a" style="left:1590px;top:271px" width="20" height="20" viewBox="0 0 20 20"><path d="M3 9a7 7 0 0 1 12-4.5" fill="none" stroke="#a9b5c8" stroke-width="2.5"/><path d="M17.5 1v6.5H11z" fill="#a9b5c8"/><path d="M17 11a7 7 0 0 1-12 4.5" fill="none" stroke="#a9b5c8" stroke-width="2.5"/><path d="M2.5 19v-6.5H9z" fill="#a9b5c8"/></svg>
<svg class="a cd" style="top:274px" width="22" height="14" viewBox="0 0 22 14"><path d="M2 2l9 9 9-9" fill="none" stroke="#fff" stroke-width="2.8"/></svg>
<!-- card3 -->
<div class="a rc" style="top:315px;height:56px"><div class="a band"></div></div>
<div class="a st nw" style="left:1308px;top:337px;font-size:16px;color:#dfe6f1">Approval Processes</div>
<svg class="a cd" style="top:339px" width="22" height="14" viewBox="0 0 22 14"><path d="M2 2l9 9 9-9" fill="none" stroke="#fff" stroke-width="2.8"/></svg>
<!-- card4 -->
<div class="a rc" style="top:380px;height:56px"><div class="a band"></div></div>
<svg class="a" style="left:1307px;top:404px" width="16" height="14" viewBox="0 0 16 14"><path d="M8 13.5L1.8 7.5C-.5 5.2.6 1 4 1c1.8 0 3 1 4 2.2C9 2 10.2 1 12 1c3.4 0 4.5 4.2 2.2 6.5z" fill="#f0952a"/><path d="M1 7h4l1.5-2.5 2 5 1.5-2.5H15" fill="none" stroke="#3b5684" stroke-width="1"/></svg>
<div class="a st nw" style="left:1330px;top:402px;font-size:16px;color:#dfe6f1">Pay attention to this Opportunity!</div>
<svg class="a cd" style="top:404px" width="22" height="14" viewBox="0 0 22 14"><path d="M2 2l9 9 9-9" fill="none" stroke="#fff" stroke-width="2.8"/></svg>
<!-- card5 -->
<div class="a rc" style="top:445px;height:112px"><div class="a band"></div><div class="a" style="left:0;top:53px;width:100%;height:1px;background:#263f68"></div></div>
<div class="a st nw" style="left:1308px;top:467px;font-size:16px;color:#dfe6f1">Static Profiles</div>
<svg class="a cd" style="top:468px" width="22" height="14" viewBox="0 0 22 14"><path d="M2 12l9-9 9 9" fill="none" stroke="#fff" stroke-width="2.8"/></svg>
<div class="a nw" style="left:1313px;top:521px;font-size:14px;color:#b9c5d9">Add Static Profiles...</div>
<!-- card6 -->
<div class="a rc" style="top:566px;height:113px"><div class="a band"></div><div class="a" style="left:0;top:54px;width:100%;height:1px;background:#263f68"></div></div>
<div class="a st nw" style="left:1308px;top:588px;font-size:16px;color:#dfe6f1">Tags</div>
<div class="a nw" style="left:1313px;top:642px;font-size:14px;color:#b9c5d9">Add tags...</div>
<!-- card7 sales pipeline -->
<div class="a rc" style="top:687px;height:240px"><div class="a band"></div><div class="a" style="left:0;top:57px;width:100%;height:1px;background:#263f68"></div>
<div class="a" style="left:0;top:140px;width:100%;height:100px;background:#5b7aad"></div></div>
<div class="a" style="left:1308px;top:709px;width:8px;height:17px;background:#b8451f;border:1px solid #d9622f"></div>
<div class="a st nw" style="left:1324px;top:710px;font-size:15.6px;color:#dfe6f1">Sales Pipeline</div>
<div class="a" style="left:1584px;top:705px;width:60px;height:28px;background:#d6dde9;border-radius:4px;font-size:12px;color:#1f2d50;text-align:center;line-height:28px">Change</div>
<svg class="a" style="left:1340px;top:755px" width="260" height="75" viewBox="1340 755 260 75">
<defs><clipPath id="c2"><rect x="1395" y="780.7" width="55" height="40"/></clipPath><clipPath id="c3"><rect x="1440" y="779.8" width="65" height="45"/></clipPath>
<filter id="sh" x="-30%" y="-30%" width="160%" height="170%"><feDropShadow dx="0" dy="2" stdDeviation="1.8" flood-color="#1a2a4a" flood-opacity=".55"/></filter></defs>
<circle cx="1372" cy="788" r="18.9" fill="none" stroke="#2c4777" stroke-width="6"/>
<circle cx="1422" cy="788" r="18.9" fill="none" stroke="#2c4777" stroke-width="6"/>
<circle cx="1422" cy="788" r="18.9" fill="none" stroke="#6aa586" stroke-width="6" clip-path="url(#c2)"/>
<g filter="url(#sh)"><circle cx="1472" cy="788.2" r="21.8" fill="#3b5684" stroke="#2c4777" stroke-width="6.4"/></g>
<circle cx="1472" cy="788.2" r="21.8" fill="none" stroke="#4d94e0" stroke-width="6.4" clip-path="url(#c3)"/>
<path d="M1464.3 761h15.6l-7.8 7.8z" fill="#4d94e0"/>
<circle cx="1522" cy="788" r="18.9" fill="none" stroke="#8593a1" stroke-width="6"/>
<circle cx="1572" cy="788" r="18.9" fill="none" stroke="#8593a1" stroke-width="6"/>
<path d="M1462 828l10-9.7 10 9.7z" fill="#5b7aad"/>
<path d="M1564.5 778h14.5v3.5c0 7-3.5 10-7.25 10s-7.25-3-7.25-10z" fill="#fff"/>
<path d="M1564.8 781.5c-3.3-.3-3 5.5.8 6.5M1578.7 781.5c3.3-.3 3 5.5-.8 6.5" fill="none" stroke="#fff" stroke-width="1.3"/>
<path d="M1570.8 791h2l1 4.5h-4zM1566 795.5h11.5l1 2h-13.5z" fill="#fff"/>
</svg>
<div class="a w nw" style="left:1365px;top:780px;font-size:14.5px;width:14px;text-align:center">1</div>
<div class="a w nw" style="left:1415px;top:780px;font-size:14.5px;width:14px;text-align:center">2</div>
<div class="a w nw" style="left:1465px;top:780px;font-size:14.5px;width:14px;text-align:center">3</div>
<div class="a w nw" style="left:1515px;top:780px;font-size:14.5px;width:14px;text-align:center">4</div>
<div class="a st w nw" style="left:1308px;top:843px;font-size:20px">3. Proposal</div>
<div class="a" style="left:1415px;top:848px;width:14px;height:14px;border-radius:50%;background:#a7b8d4;color:#5b7aad;font-size:11px;font-weight:700;text-align:center;line-height:14px">i</div>
<div class="a" style="left:1308px;top:875px;width:168px;height:32px;background:#2b4470;border-radius:4px"></div>
<div class="a st w nw" style="left:1320px;top:882px;font-size:15px">Move into next step &#8250;&#8250;</div>
<div class="a w nw" style="left:1560px;top:872px;width:48px;text-align:right;font-size:17px;font-weight:700">2/3</div>
<div class="a w nw" style="left:1560px;top:896px;width:48px;text-align:right;font-size:12px;font-weight:400">67%</div>
<svg class="a" style="left:1610px;top:873px" width="36" height="36" viewBox="0 0 36 36">
<defs><clipPath id="c4"><rect x="0" y="12.3" width="36" height="30"/></clipPath></defs>
<circle cx="18" cy="18" r="13.85" fill="#39528a" stroke="#2b4573" stroke-width="4.3"/>
<circle cx="18" cy="18" r="13.85" fill="none" stroke="#fff" stroke-width="4.3" clip-path="url(#c4)"/>
<path d="M13.8 18.3l3 3 4.6-5.6" fill="none" stroke="#fff" stroke-width="1.5"/>
</svg>
<!-- window frame -->
<div class="a" style="left:1291px;top:912px;width:399px;height:23px;background:#36517f"></div>

<!-- frame -->
<div class="a" style="left:1688px;top:33px;width:1px;height:902px;background:#2c4473"></div>
<div class="a" style="left:0;top:0;width:1690px;height:935px;border-left:1px solid #5d76a3;border-right:1px solid #5d76a3;border-bottom:1px solid #5d76a3;border-radius:0 0 9px 9px;box-shadow:0 0 0 40px #000;pointer-events:none"></div>
</body></html>
